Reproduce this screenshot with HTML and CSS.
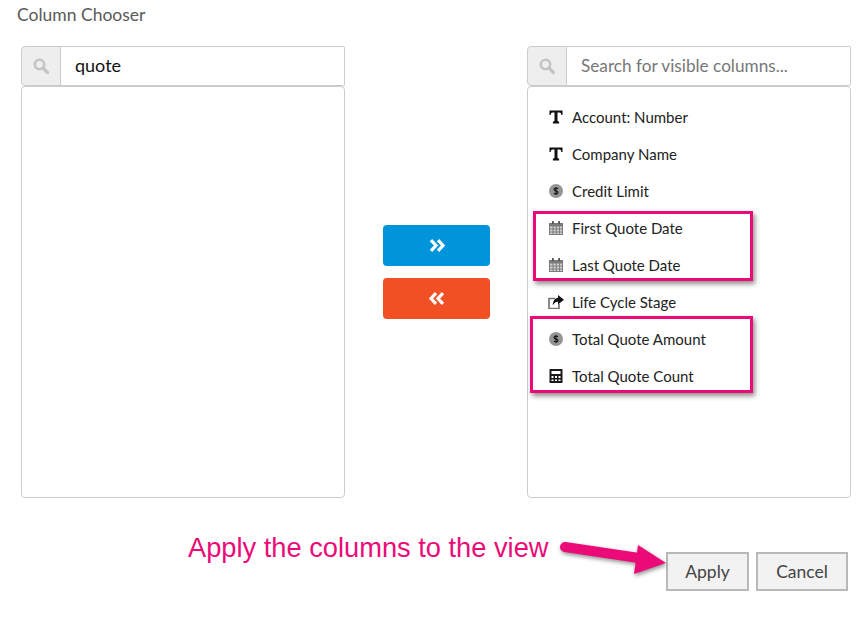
FILE: index.html
```html
<!DOCTYPE html>
<html lang="en">
<head>
<meta charset="utf-8">
<title>Column Chooser</title>
<link rel="stylesheet" href="styles.css">
</head>
<body>
<svg width="0" height="0" class="defs">
  <defs>
    <symbol id="i-search" viewBox="0 0 16 16"><circle cx="6.500" cy="6.500" r="4.700" fill="none" stroke="currentColor" stroke-width="2.600"/><path d="M10 10l4.500 4.500" stroke="currentColor" stroke-width="3.200" stroke-linecap="round"/></symbol>
    <symbol id="i-text" viewBox="0 0 14 14"><path d="M0.500 0.500h13v4.500h-1.200c-.2-1.600-.8-2.400-2-2.400H8.500v8c0 .8.400 1 1.600 1V13.500H3.900v-1.900c1.200 0 1.600-.2 1.600-1v-8H3.700c-1.200 0-1.800.8-2 2.400H.5z" fill="#111"/></symbol>
    <symbol id="i-money" viewBox="0 0 14 14"><circle cx="7" cy="7" r="7" fill="#959595"/><path d="M9 4.800C8.500 4.200 7.800 4 7 4 5.800 4 5 4.600 5 5.500c0 2 4 1 4 3 0 .9-.8 1.500-2 1.500-.8 0-1.600-.3-2.100-.9M7 3v8" fill="none" stroke="#111" stroke-width="1.100"/></symbol>
    <symbol id="i-cal" viewBox="0 0 14 14"><path d="M0 2h14V14H0z" fill="#7a7a7a"/><path d="M3 0h1.800v3H3zM9.200 0H11v3H9.200z" fill="#555"/><path d="M1 5.500h2.500v2H1zM4.500 5.500h2.300v2H4.500zM7.800 5.500h2.300v2H7.800zM11 5.500h2v2h-2zM1 8.500h2.500v2H1zM4.500 8.500h2.300v2H4.500zM7.800 8.500h2.300v2H7.800zM11 8.500h2v2h-2zM1 11.500h2.500v1.500H1zM4.500 11.500h2.300v1.500H4.500zM7.800 11.500h2.300v1.500H7.800zM11 11.500h2v1.500h-2z" fill="#d4d4d4"/></symbol>
    <symbol id="i-share" viewBox="0 0 16 14"><path d="M7 3.500H1v10h10V9" fill="none" stroke="#777" stroke-width="1.700"/><path d="M10 0L16 4.800 10 9.500V6.800C8 6.800 6 7.800 4.800 10.500 4.800 6 7 3 10 2.800z" fill="#111"/></symbol>
    <symbol id="i-calc" viewBox="0 0 13 14"><path fill-rule="evenodd" d="M0 0h13v14H0zM2 2v3h9V2zM2 7v2h2V7zM5.500 7v2h2V7zM9 7v2h2V7zM2 10.500V12h2v-1.500zM5.500 10.500V12h2v-1.500zM9 10.500V12h2v-1.500z" fill="#1a1a1a"/></symbol>
  </defs>
</svg>

<h1 class="title">Column Chooser</h1>

<main class="chooser">
  <section class="panel">
    <div class="search">
      <span class="search-addon"><svg class="search-icon"><use href="#i-search"/></svg></span>
      <input class="search-input search-filled" type="text" value="quote">
    </div>
    <div class="list"></div>
  </section>

  <div class="movers">
    <button class="mover mover-add" type="button" aria-label="Add"><svg class="chev" viewBox="0 0 16 13"><path d="M2 1.200l5 5.300-5 5.300M9 1.200l5 5.300-5 5.300" fill="none" stroke="#fff" stroke-width="3.200"/></svg></button>
    <button class="mover mover-remove" type="button" aria-label="Remove"><svg class="chev" viewBox="0 0 16 13"><path d="M7 1.200l-5 5.300 5 5.300M14 1.200l-5 5.300 5 5.300" fill="none" stroke="#fff" stroke-width="3.200"/></svg></button>
  </div>

  <section class="panel">
    <div class="search">
      <span class="search-addon"><svg class="search-icon"><use href="#i-search"/></svg></span>
      <input class="search-input search-placeholder" type="text" placeholder="Search for visible columns...">
    </div>
    <ul class="list list-items">
      <li class="item"><svg class="item-icon"><use href="#i-text"/></svg>Account: Number</li>
      <li class="item"><svg class="item-icon"><use href="#i-text"/></svg>Company Name</li>
      <li class="item"><svg class="item-icon"><use href="#i-money"/></svg>Credit Limit</li>
      <li class="item"><svg class="item-icon"><use href="#i-cal"/></svg>First Quote Date</li>
      <li class="item"><svg class="item-icon"><use href="#i-cal"/></svg>Last Quote Date</li>
      <li class="item"><svg class="item-icon item-icon-wide"><use href="#i-share"/></svg>Life Cycle Stage</li>
      <li class="item"><svg class="item-icon"><use href="#i-money"/></svg>Total Quote Amount</li>
      <li class="item"><svg class="item-icon"><use href="#i-calc"/></svg>Total Quote Count</li>
    </ul>
    <div class="mark mark-dates"></div>
    <div class="mark mark-totals"></div>
  </section>
</main>

<footer class="actions">
  <p class="note">Apply the columns to the view</p>
  <svg class="arrow" viewBox="0 0 112 40" width="112" height="40">
    <path d="M6 6 L80 17" stroke="#ec0a78" stroke-width="10" stroke-linecap="round"/>
    <path d="M79 4 L107 22 L75 33 Z" fill="#ec0a78"/>
  </svg>
  <button class="action" type="button">Apply</button>
  <button class="action action-cancel" type="button">Cancel</button>
</footer>
</body>
</html>
```

FILE: styles.css
```css
* { box-sizing: border-box; }

html, body { margin: 0; padding: 0; }

body {
  width: 868px;
  height: 617px;
  overflow: hidden;
  background: #fff;
  font-family: Lato, "Open Sans", sans-serif;
  color: #333;
  position: relative;
}

.defs { position: absolute; }

.title {
  margin: 0;
  padding: 5px 0 0 17px;
  height: 46px;
  font-size: 17.500px;
  line-height: 20px;
  font-weight: 400;
  color: #5a5a5a;
}

.chooser {
  display: flex;
  padding-left: 21px;
  height: 452px;
}

.panel {
  position: relative;
  width: 324px;
  display: flex;
  flex-direction: column;
}

.search {
  display: flex;
  height: 40px;
}

.search-addon {
  width: 40px;
  display: flex;
  align-items: center;
  justify-content: center;
  background: #eee;
  border: 1px solid #ccc;
  border-radius: 4px 0 0 4px;
}

.search-icon {
  width: 16px;
  height: 16px;
  color: #c4c4c4;
}

.search-input {
  flex: 1;
  min-width: 0;
  border: 1px solid #ccc;
  border-left: 0;
  padding: 0 14px 2px;
  font: 18px/1 Lato, sans-serif;
  outline: 0;
  color: #111;
  border-radius: 0 2px 2px 0;
}

.search-placeholder { font-size: 17.200px; }

.search-input::placeholder { color: #777; opacity: 1; }

.list {
  flex: 1;
  margin: 0;
  border: 1px solid #ccc;
  border-radius: 4px;
  list-style: none;
}

.list-items { padding: 11px 0 0 21px; }

.item {
  display: flex;
  align-items: center;
  height: 37px;
  font-size: 15px;
  color: #222;
}

.item-icon {
  width: 14px;
  height: 14px;
  margin-right: 9px;
  flex: none;
}

.item-icon-wide {
  width: 16px;
  margin-left: -1px;
  margin-right: 8px;
}

.mark {
  position: absolute;
  border: 3px solid #ec0a78;
  box-shadow: 2px 3px 5px rgba(0, 0, 0, .45);
}

.mark-dates { left: 6px; top: 165px; width: 220px; height: 70px; }
.mark-totals { left: 3px; top: 270px; width: 223px; height: 77px; }

.movers {
  width: 182px;
  display: flex;
  flex-direction: column;
  align-items: center;
  gap: 12px;
  padding: 179px 0 0 1px;
}

.mover {
  width: 107px;
  height: 41px;
  border: 0;
  border-radius: 4px;
  display: flex;
  align-items: center;
  justify-content: center;
  padding: 0;
}

.mover-add { background: #0094db; }
.mover-remove { background: #f05023; }

.chev { width: 16px; height: 13px; }

.actions {
  display: flex;
  align-items: flex-start;
  position: relative;
  padding: 54px 0 0 666px;
}

.note {
  position: absolute;
  left: 188px;
  top: 33px;
  margin: 0;
  font: 27.250px/34px "Liberation Sans", Arial, sans-serif;
  color: #ec0a78;
  white-space: nowrap;
}

.arrow {
  position: absolute;
  left: 559px;
  top: 43px;
  filter: drop-shadow(1px 2px 2px rgba(0, 0, 0, .45));
}

.action {
  width: 83px;
  height: 39px;
  background: #f2f2f2;
  border: 2px solid #b9b9b9;
  font: 17.500px Lato, sans-serif;
  color: #444;
  padding: 0;
}

.action-cancel { width: 92px; margin-left: 7px; }
```
